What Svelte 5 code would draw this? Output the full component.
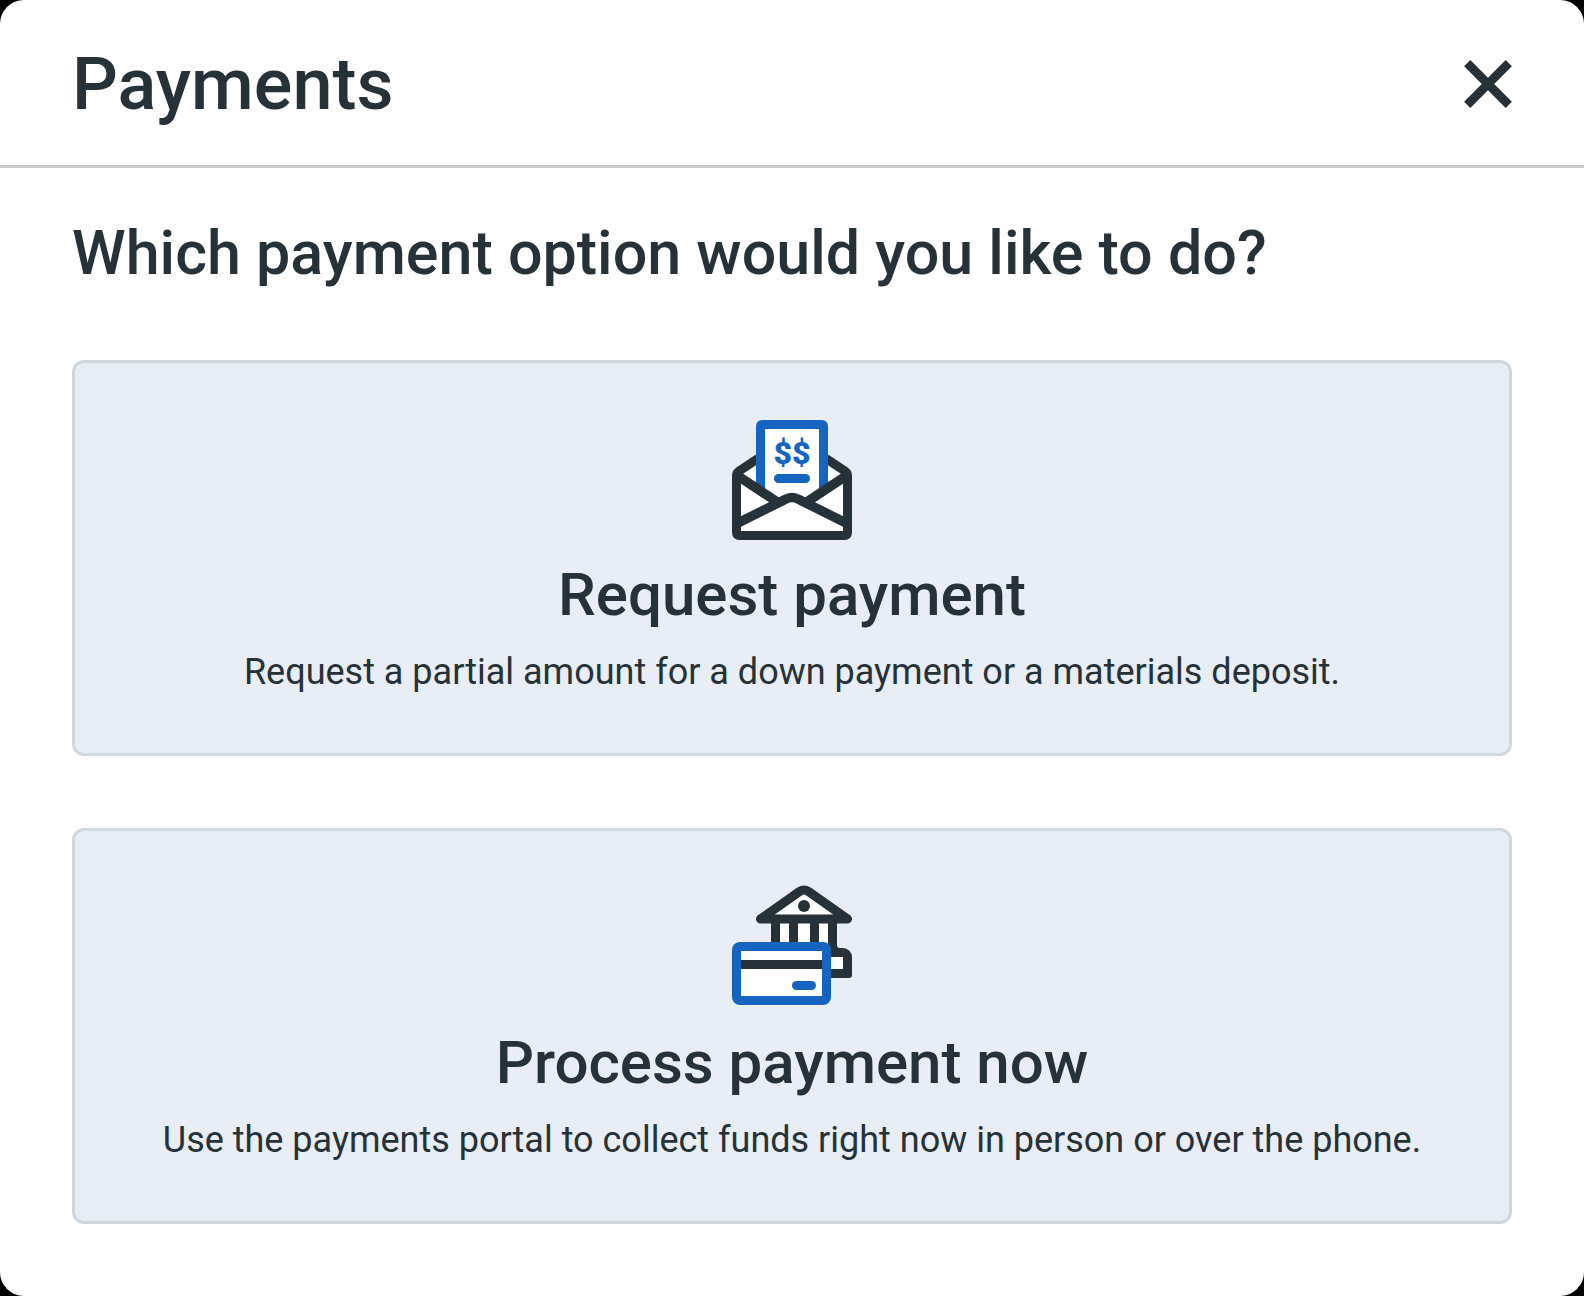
<script>
  const options = [
    {
      id: 'request',
      title: 'Request payment',
      text: 'Request a partial amount for a down payment or a materials deposit.'
    },
    {
      id: 'process',
      title: 'Process payment now',
      text: 'Use the payments portal to collect funds right now in person or over the phone.'
    }
  ];
</script>

<main class="dialog" aria-labelledby="dialog-title">
  <header class="header">
    <h1 id="dialog-title">Payments</h1>
    <button class="close" type="button" aria-label="Close">
      <svg viewBox="0 0 48 48" width="48" height="48" aria-hidden="true">
        <path d="M3.2 3.2L44.8 44.8M44.8 3.2L3.2 44.8" fill="none" stroke="#263238" stroke-width="8.8" />
      </svg>
    </button>
  </header>

  <section class="body">
    <h2>Which payment option would you like to do?</h2>
    <div class="options">
      {#each options as option (option.id)}
        <button class="option" type="button">
          <svg class="icon" viewBox="0 0 144 144" width="144" height="144" aria-hidden="true">
            {#if option.id === 'request'}
              <!-- envelope back -->
              <path d="M16.5 65L40 49H104L127.5 65V127.5H16.5Z" fill="#fff" />
              <path d="M38 50.5L18.5 63.5Q16.5 65 16.5 67.5V124.5Q16.5 127.5 19.5 127.5H124.5Q127.5 127.5 127.5 124.5V67.5Q127.5 65 125.5 63.5L106 50.5" fill="none" stroke="#263238" stroke-width="9" />
              <!-- invoice -->
              <path d="M36 80.5V18a6 6 0 0 1 6-6H102a6 6 0 0 1 6 6V80.5L99 86.5V21H45V86.5Z" fill="#1565c0" />
              <path d="M45 21H99V87L72 96L45 87Z" fill="#fff" />
              <text class="amount" x="72" y="56" text-anchor="middle">$$</text>
              <rect x="54" y="66" width="36" height="9" rx="4.5" fill="#1565c0" />
              <!-- envelope front -->
              <path d="M18 68L58 94.5M126 68L86 94.5M17 115.5L65 91.5Q72 87.5 79 91.5L127 115.5" fill="none" stroke="#263238" stroke-width="9.5" />
            {:else}
              <!-- bank -->
              <path d="M51 45H117V75H51Z" fill="#fff" />
              <path d="M40.5 43L79.5 15.5Q84 12.5 88.5 15.5L127.5 43Z" fill="#fff" stroke="#263238" stroke-width="9" stroke-linejoin="round" />
              <circle cx="84" cy="30" r="6" fill="#263238" />
              <path d="M51 45h9V70h-9ZM69 45h9V70h-9ZM90 45h9V70h-9Z" fill="#263238" />
              <path d="M108 45h9V69a3 3 0 0 0 3 3H123a9 9 0 0 1 9 9V99a3 3 0 0 1-3 3H105V72h3Z" fill="#263238" />
              <path d="M108 81H123V93H108Z" fill="#fff" />
              <!-- card -->
              <rect x="12" y="66" width="99" height="63" rx="8" fill="#1565c0" />
              <path d="M21 75H102V120H21Z" fill="#fff" />
              <path d="M21 84H102V93H21Z" fill="#263238" />
              <rect x="72" y="105" width="24" height="9" rx="4.5" fill="#1565c0" />
            {/if}
          </svg>
          <span class="option-title">{option.title}</span>
          <span class="option-text">{option.text}</span>
        </button>
      {/each}
    </div>
  </section>
</main>

<style>
  :global(body) {
    margin: 0;
    background: #000;
  }

  .dialog {
    min-height: 100vh;
    box-sizing: border-box;
    background: #fff;
    border-radius: 24px;
    color: #263238;
    font-family: Roboto, sans-serif;
  }

  .header {
    display: flex;
    align-items: center;
    justify-content: space-between;
    padding: 42px 72px 39px;
    border-bottom: 3px solid #ccc;
  }

  h1,
  h2 {
    margin: 0;
    padding-top: 2px;
    font-weight: 500;
    line-height: 82px;
  }

  h1 {
    font-size: 72px;
  }

  h2 {
    font-size: 61px;
  }

  button {
    font: inherit;
    color: inherit;
    cursor: pointer;
  }

  .close {
    display: flex;
    padding: 0;
    border: 0;
    background: none;
  }

  .body {
    padding: 42px 72px 72px;
  }

  .options {
    display: flex;
    flex-direction: column;
    gap: 72px;
    margin-top: 66px;
  }

  .option {
    display: flex;
    flex-direction: column;
    align-items: center;
    padding: 45px 24px 54px;
    border: 3px solid #cfd8dc;
    border-radius: 12px;
    background: #e8edf6;
    text-align: center;
  }

  .icon {
    display: block;
  }

  .amount {
    font-family: Roboto, sans-serif;
    font-size: 32px;
    font-weight: 900;
    fill: #1565c0;
  }

  .option-title {
    margin-top: 6px;
    font-size: 60px;
    font-weight: 500;
    line-height: 74px;
  }

  .option-text {
    margin-top: 13px;
    font-size: 36px;
    line-height: 54px;
  }
</style>
